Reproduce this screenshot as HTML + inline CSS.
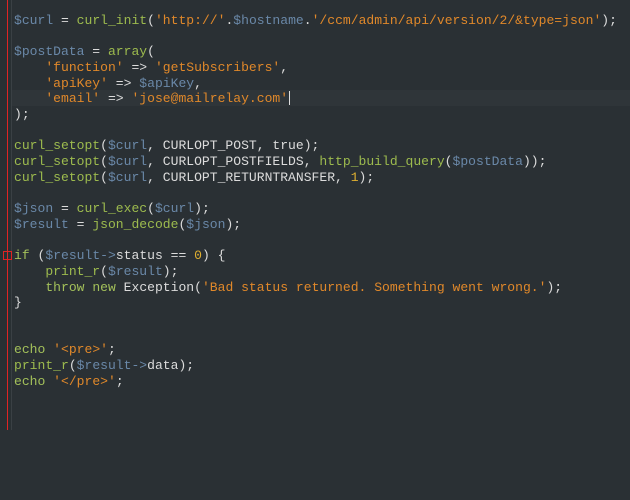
<!DOCTYPE html>
<html><head><meta charset="utf-8"><style>
html,body{margin:0;padding:0;}
body{width:630px;height:500px;background:#2a3034;position:relative;overflow:hidden;}
.gut{position:absolute;left:0;top:0;width:12px;height:430px;background:#293033;}
.red{position:absolute;left:7px;top:0;width:1px;height:430px;background:#e02424;}
.gl{position:absolute;left:11px;top:0;width:1px;height:430px;background:#3a4044;}
.hl{position:absolute;left:12px;top:90px;width:618px;height:16px;background:#2f3539;}
pre{position:absolute;left:14px;top:-3px;margin:0;font-family:"Liberation Mono",monospace;font-size:13.05px;line-height:15.7px;color:#dcdcdc;}
.v{color:#6a88a8}.f{color:#9dbb4e}.s{color:#e0882a}.k{color:#a3c05a}.n{color:#e0b030}
.fold{position:absolute;left:3px;top:251px;width:7px;height:7px;border:1px solid #e02424;}
.caret{position:absolute;left:289px;top:91px;width:1px;height:14px;background:#ddd;}
</style></head><body>
<div class="gut"></div><div class="red"></div><div class="gl"></div>
<div class="hl"></div>
<div class="fold"></div>
<pre>&#8203;
<span class="v">$curl</span> = <span class="f">curl_init</span>(<span class="s">'http://'</span>.<span class="v">$hostname</span>.<span class="s">'/ccm/admin/api/version/2/&amp;type=json'</span>);

<span class="v">$postData</span> = <span class="f">array</span>(
    <span class="s">'function'</span> =&gt; <span class="s">'getSubscribers'</span>,
    <span class="s">'apiKey'</span> =&gt; <span class="v">$apiKey</span>,
    <span class="s">'email'</span> =&gt; <span class="s">'jose@mailrelay.com'</span>
);

<span class="f">curl_setopt</span>(<span class="v">$curl</span>, CURLOPT_POST, true);
<span class="f">curl_setopt</span>(<span class="v">$curl</span>, CURLOPT_POSTFIELDS, <span class="f">http_build_query</span>(<span class="v">$postData</span>));
<span class="f">curl_setopt</span>(<span class="v">$curl</span>, CURLOPT_RETURNTRANSFER, <span class="n">1</span>);

<span class="v">$json</span> = <span class="f">curl_exec</span>(<span class="v">$curl</span>);
<span class="v">$result</span> = <span class="f">json_decode</span>(<span class="v">$json</span>);

<span class="k">if</span> (<span class="v">$result</span><span class="v">-&gt;</span>status == <span class="n">0</span>) {
    <span class="f">print_r</span>(<span class="v">$result</span>);
    <span class="k">throw</span> <span class="k">new</span> Exception(<span class="s">'Bad status returned. Something went wrong.'</span>);
}


<span class="k">echo</span> <span class="s">'&lt;pre&gt;'</span>;
<span class="f">print_r</span>(<span class="v">$result</span><span class="v">-&gt;</span>data);
<span class="k">echo</span> <span class="s">'&lt;/pre&gt;'</span>;
</pre>
<div class="caret"></div>
</body></html>
